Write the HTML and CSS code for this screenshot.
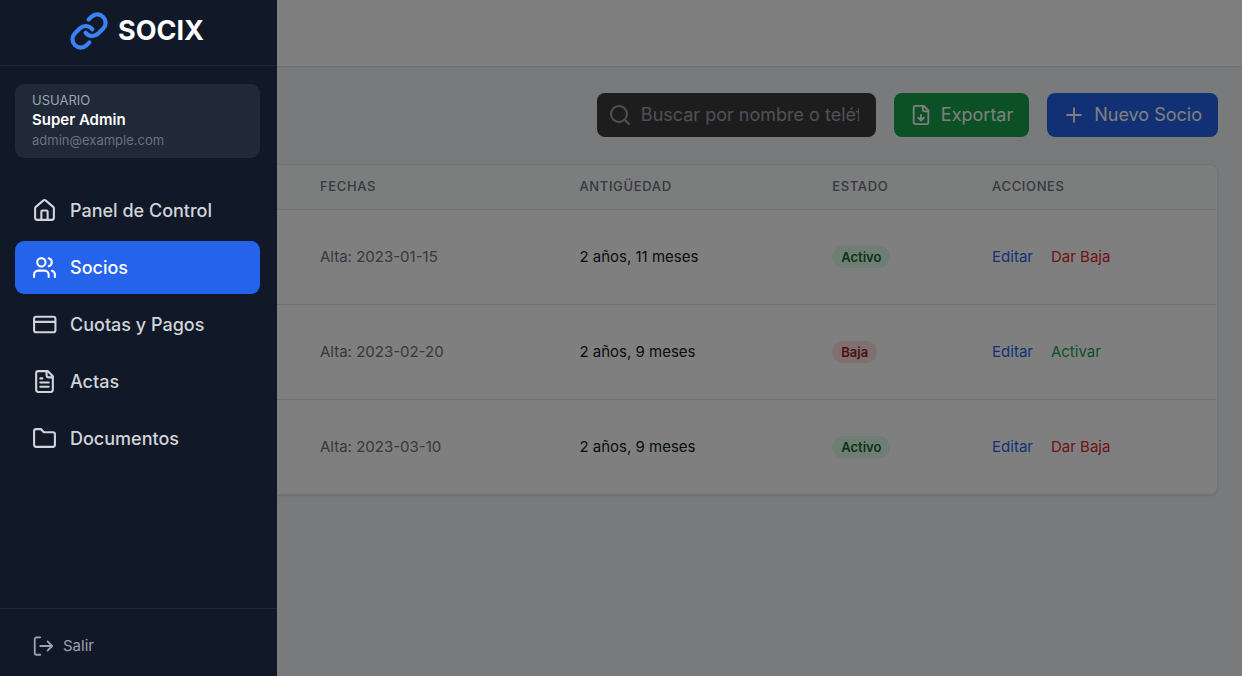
FILE: index.html
```html
<!DOCTYPE html>
<html lang="es">
<head>
<meta charset="utf-8">
<meta name="viewport" content="width=device-width, initial-scale=1">
<title>Socix - Socios</title>
<link rel="stylesheet" href="styles.css">
</head>
<body>
<div class="app">
  <aside class="sidebar">
    <div class="brand">
      <svg class="brand-icon" viewBox="0 0 24 24"><path d="M10 13a5 5 0 0 0 7.54.54l3-3a5 5 0 0 0-7.07-7.07l-1.72 1.71"/><path d="M14 11a5 5 0 0 0-7.54-.54l-3 3a5 5 0 0 0 7.07 7.07l1.71-1.71"/></svg>
      <span class="brand-name">SOCIX</span>
    </div>
    <div class="sidebar-body">
      <div class="user-card">
        <p class="user-label">USUARIO</p>
        <p class="user-name">Super Admin</p>
        <p class="user-email">admin@example.com</p>
      </div>
      <nav class="nav">
        <a class="nav-link" href="#panel"><svg class="icon" viewBox="0 0 24 24"><path d="M3 10a2 2 0 0 1 .7-1.5l7-6a2 2 0 0 1 2.600 0l7 6A2 2 0 0 1 21 10v9a2 2 0 0 1-2 2H5a2 2 0 0 1-2-2z"/><path d="M15 21v-8a1 1 0 0 0-1-1h-4a1 1 0 0 0-1 1v8"/></svg>Panel de Control</a>
        <a class="nav-link active" href="#socios"><svg class="icon" viewBox="0 0 24 24"><path d="M16 21v-2a4 4 0 0 0-4-4H6a4 4 0 0 0-4 4v2"/><circle cx="9" cy="7" r="4"/><path d="M22 21v-2a4 4 0 0 0-3-3.870"/><path d="M16 3.130a4 4 0 0 1 0 7.750"/></svg>Socios</a>
        <a class="nav-link" href="#cuotas"><svg class="icon" viewBox="0 0 24 24"><rect x="2" y="4.500" width="20.500" height="15" rx="2"/><path d="M2 9.500h20"/></svg>Cuotas y Pagos</a>
        <a class="nav-link" href="#actas"><svg class="icon" viewBox="0 0 24 24"><path d="M15 2H6a2 2 0 0 0-2 2v16a2 2 0 0 0 2 2h12a2 2 0 0 0 2-2V7z"/><path d="M14 2v4a2 2 0 0 0 2 2h4M10 9H8M16 13H8M16 17H8"/></svg>Actas</a>
        <a class="nav-link" href="#documentos"><svg class="icon" viewBox="0 0 24 24"><path d="M20 20a2 2 0 0 0 2-2V8a2 2 0 0 0-2-2h-7.900a2 2 0 0 1-1.690-.9L9.600 3.900A2 2 0 0 0 7.930 3H4a2 2 0 0 0-2 2v13a2 2 0 0 0 2 2z"/></svg>Documentos</a>
      </nav>
    </div>
    <div class="sidebar-footer">
      <button class="logout" type="button"><svg class="icon-small" viewBox="0 0 24 24"><path d="M9 21.500H5A2 2 0 0 1 3 19.500v-15a2 2 0 0 1 2-2h4M17 17l5-5-5-5M22 12H9"/></svg>Salir</button>
    </div>
  </aside>
  <div class="content">
    <header class="topbar"></header>
    <main class="main">
      <div class="toolbar">
        <label class="search">
          <svg class="search-icon" viewBox="0 0 24 24"><circle cx="11" cy="11" r="8"/><path d="m21 21-4.300-4.300"/></svg>
          <input class="search-input" type="text" aria-label="Buscar socio" placeholder="Buscar por nombre o teléfono...">
        </label>
        <button class="btn btn-green" type="button"><svg class="btn-icon" viewBox="0 0 24 24"><path d="M15 2H6a2 2 0 0 0-2 2v16a2 2 0 0 0 2 2h12a2 2 0 0 0 2-2V7z"/><path d="M14 2v4a2 2 0 0 0 2 2h4M12 18v-6M9 15l3 3 3-3"/></svg>Exportar</button>
        <button class="btn btn-blue" type="button"><svg class="btn-icon" viewBox="0 0 24 24"><path d="M4.500 12h15M12 4.500v15"/></svg>Nuevo Socio</button>
      </div>
      <div class="card">
        <table class="table">
          <colgroup><col class="col-dates"><col class="col-age"><col class="col-state"><col></colgroup>
          <thead><tr><th scope="col">FECHAS</th><th scope="col">ANTIGÜEDAD</th><th scope="col">ESTADO</th><th scope="col">ACCIONES</th></tr></thead>
          <tbody>
            <tr><td class="date">Alta: 2023-01-15</td><td>2 años, 11 meses</td><td><span class="badge badge-green">Activo</span></td><td><div class="actions"><button class="action blue" type="button">Editar</button><button class="action red" type="button">Dar Baja</button></div></td></tr>
            <tr><td class="date">Alta: 2023-02-20</td><td>2 años, 9 meses</td><td><span class="badge badge-red">Baja</span></td><td><div class="actions"><button class="action blue" type="button">Editar</button><button class="action green" type="button">Activar</button></div></td></tr>
            <tr><td class="date">Alta: 2023-03-10</td><td>2 años, 9 meses</td><td><span class="badge badge-green">Activo</span></td><td><div class="actions"><button class="action blue" type="button">Editar</button><button class="action red" type="button">Dar Baja</button></div></td></tr>
          </tbody>
        </table>
      </div>
    </main>
    <div class="backdrop"></div>
  </div>
</div>
</body>
</html>
```

FILE: styles.css
```css
* { box-sizing: border-box; }
body {
  margin: 0;
  background: #f3f4f6;
  font-family: Inter, "Liberation Sans", sans-serif;
  font-size: 15px;
  line-height: 20px;
}
p { margin: 0; }
button, input { font: inherit; color: inherit; }
button { border: 0; background: none; padding: 0; cursor: pointer; }
svg { fill: none; stroke: currentColor; stroke-width: 2; stroke-linecap: round; stroke-linejoin: round; flex: none; }

.app { display: grid; grid-template-columns: 277px minmax(0, 1fr); min-height: 100vh; }

.sidebar { display: flex; flex-direction: column; background: #111827; color: #d1d5db; }
.brand {
  display: flex; align-items: center; justify-content: center; gap: 9px;
  height: 66px; padding: 0 4px 4px 0;
  border-bottom: 1px solid #1f2937;
}
.brand-icon { width: 40px; height: 40px; color: #3b82f6; stroke-width: 2.500; }
.brand-name { color: #fff; font-size: 27px; font-weight: 700; }
.sidebar-body { flex: 1; padding: 18px 17px 18px 15px; }
.user-card { padding: 7px 17px 9px; border-radius: 9px; background: #1f2937; }
.user-label, .user-email { font-size: 13px; line-height: 18px; }
.user-label { color: #9ca3af; }
.user-name { color: #fff; font-weight: 600; line-height: 22px; }
.user-email { color: #6b7280; }
.nav { display: flex; flex-direction: column; gap: 4px; margin-top: 26px; }
.nav-link {
  display: flex; align-items: center; gap: 13px;
  height: 53px; padding: 0 17px; border-radius: 9px;
  color: #d1d5db; font-size: 18px; font-weight: 500; text-decoration: none;
}
.nav-link.active { background: #2563eb; color: #fff; }
.icon { width: 25px; height: 25px; }
.sidebar-footer { padding: 21px 15px 14px; border-top: 1px solid #1f2937; }
.logout { display: flex; align-items: center; gap: 9px; padding: 5px 17px; color: #9ca3af; line-height: 22px; }
.icon-small { width: 22px; height: 22px; }

.content { position: relative; display: flex; flex-direction: column; }
.topbar { height: 66px; background: #fff; box-shadow: 0 1px 2px rgba(0, 0, 0, 0.1); }
.main { padding: 27px 24px 27px 0; }
.toolbar { display: flex; justify-content: flex-end; gap: 18px; margin-bottom: 27px; }
.search {
  display: flex; align-items: center; gap: 9px;
  width: 279px; height: 44px; padding: 0 17px 0 11px; border-radius: 8px;
  background: #3b3b3b; color: #9ca3af;
}
.search-icon { width: 24px; height: 24px; }
.search-input { flex: 1; min-width: 0; padding: 0; border: 0; outline: 0; background: none; font-size: 18px; }
.search-input::placeholder { color: #9ca3af; opacity: 1; }
.btn { display: flex; align-items: center; gap: 9px; height: 44px; padding: 0 16px; border-radius: 8px; color: #fff; font-size: 18px; }
.btn-icon { width: 22px; height: 22px; }
.btn-green { background: #16a34a; }
.btn-blue { background: #2563eb; }

.card { overflow: hidden; border: 1px solid #e5e7eb; border-left: 0; border-radius: 0 8px 8px 0; background: #fff; box-shadow: 0 1px 2px rgba(0, 0, 0, 0.1); }
.table { width: 100%; border-collapse: collapse; table-layout: fixed; }
.col-dates { width: 29.300%; }
.col-age { width: 26.900%; }
.col-state { width: 17%; }
.table th, .table td { padding: 0 27px; text-align: left; }
.table th:first-child, .table td:first-child { padding-left: 43px; }
.table th { height: 44px; padding-bottom: 2px; background: #f9fafb; color: #6b7280; font-size: 13px; font-weight: 500; letter-spacing: 0.05em; }
.table td { height: 95px; border-top: 1px solid #e5e7eb; color: #111827; }
.table td.date { color: #6b7280; }
.badge { display: inline-block; padding: 1px 9px; border-radius: 11px; font-size: 13px; font-weight: 600; }
.badge-green { background: #dcfce7; color: #166534; }
.badge-red { background: #fee2e2; color: #991b1b; }
.actions { display: flex; gap: 18px; }
.blue { color: #2563eb; }
.red { color: #dc2626; }
.green { color: #16a34a; }
.backdrop { position: absolute; inset: 0; background: rgba(0, 0, 0, 0.5); }
```
